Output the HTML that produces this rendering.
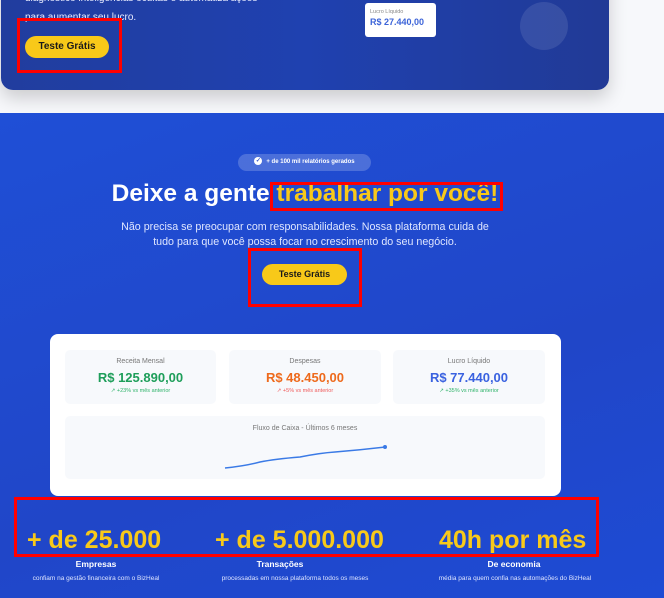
<!DOCTYPE html>
<html><head><meta charset="utf-8"><style>
*{margin:0;padding:0;box-sizing:border-box}
body{width:664px;height:598px;overflow:hidden;background:#f7f8fb;font-family:"Liberation Sans",sans-serif;position:relative}
.a{position:absolute}
.top{left:1px;top:-40px;width:608px;height:130px;border-radius:12px;background:linear-gradient(90deg,#213d9e,#1f41b0 50%,#213a96);box-shadow:0 8px 18px rgba(0,0,0,.18)}
.btn{background:#f8c919;color:#1a1a1a;font-size:10px;font-weight:bold;border-radius:12px;text-align:center}
.red{border:3px solid #f00}
.sec{left:0;top:113px;width:664px;height:485px;background:linear-gradient(160deg,#1f4fd6,#2046c8 60%,#1e4bd4)}
.c{text-align:center}
.box{background:#f7f9fc;border-radius:5px}
.lbl{font-size:7px;color:#777;}
.val{font-size:13px;font-weight:bold;margin-top:5px}
.sm{font-size:5.5px;margin-top:3px}
.stat{font-size:25px;font-weight:bold;color:#f8c919;top:526px;white-space:nowrap}
.st{font-size:8.5px;font-weight:bold;color:#fff;top:559px}
.sd{font-size:6.5px;color:#dfe6ff;top:575px}
</style></head><body>
<div class="a top"></div>
<div class="a" style="left:25px;top:-11px;font-size:10px;color:#e8ecff;line-height:19px">diagnóstico inteligências ocultas e automatiza ações<br>para aumentar seu lucro.</div>
<div class="a btn" style="left:25px;top:36px;width:84px;height:22px;line-height:22px">Teste Grátis</div>
<div class="a red" style="left:17px;top:18px;width:105px;height:55px"></div>
<div class="a" style="left:365px;top:3px;width:71px;height:34px;background:#fff;border-radius:3px;padding:6px 5px">
<div style="font-size:5.5px;color:#888">Lucro Líquido</div>
<div style="font-size:9px;font-weight:bold;color:#3b63d8;margin-top:2px">R$ 27.440,00</div></div>
<div class="a" style="left:520px;top:2px;width:48px;height:48px;border-radius:50%;background:rgba(255,255,255,.1)"></div>
<div class="a sec"></div>
<div class="a c" style="left:238px;top:154px;width:133px;height:17px;border-radius:9px;background:rgba(255,255,255,.2);color:#fff;font-size:6px;font-weight:bold;line-height:17px"><span style="display:inline-block;width:8px;height:8px;border-radius:50%;background:#fff;color:#3050c8;font-size:6px;line-height:8px;vertical-align:middle;margin-right:4px">✓</span>+ de 100 mil relatórios gerados</div>
<div class="a c" style="left:0;top:180px;width:610px;font-size:24.5px;font-weight:bold;color:#fff">Deixe a gente <span style="color:#f8c919">trabalhar por você!</span></div>
<div class="a red" style="left:270px;top:182px;width:233px;height:29px"></div>
<div class="a c" style="left:90px;top:220px;width:430px;font-size:10.7px;line-height:15px;color:#dfe6ff">Não precisa se preocupar com responsabilidades. Nossa plataforma cuida de<br>tudo para que você possa focar no crescimento do seu negócio.</div>
<div class="a btn" style="left:262px;top:264px;width:85px;height:21px;line-height:21px;font-size:9px">Teste Grátis</div>
<div class="a red" style="left:248px;top:248px;width:114px;height:59px"></div>
<div class="a" style="left:50px;top:334px;width:511px;height:162px;background:#fff;border-radius:8px"></div>
<div class="a box c" style="left:65px;top:350px;width:151px;height:54px;padding-top:8px"><div class="lbl">Receita Mensal</div><div class="val" style="color:#1e9e5a">R$ 125.890,00</div><div class="sm" style="color:#2fb36a">↗ +23% vs mês anterior</div></div>
<div class="a box c" style="left:229px;top:350px;width:152px;height:54px;padding-top:8px"><div class="lbl">Despesas</div><div class="val" style="color:#ee6a1c">R$ 48.450,00</div><div class="sm" style="color:#ef5a5a">↗ +5% vs mês anterior</div></div>
<div class="a box c" style="left:393px;top:350px;width:152px;height:54px;padding-top:8px"><div class="lbl">Lucro Líquido</div><div class="val" style="color:#3a62e0">R$ 77.440,00</div><div class="sm" style="color:#2fb36a">↗ +35% vs mês anterior</div></div>
<div class="a box c" style="left:65px;top:416px;width:480px;height:63px;padding-top:9px"><div class="lbl">Fluxo de Caixa - Últimos 6 meses</div></div>
<svg class="a" style="left:0;top:0" width="664" height="598"><path d="M225 468 Q245 466 260 462 Q275 459 300 457 Q320 453 335 452 Q360 450 385 447" fill="none" stroke="#3a7ae6" stroke-width="1.5"/><circle cx="385" cy="447" r="2" fill="#3a7ae6"/></svg>
<div class="a stat" style="left:27px">+ de 25.000</div>
<div class="a stat" style="left:215px">+ de 5.000.000</div>
<div class="a stat" style="left:439px">40h por mês</div>
<div class="a red" style="left:14px;top:497px;width:585px;height:60px"></div>
<div class="a st c" style="left:26px;width:140px">Empresas</div>
<div class="a st c" style="left:210px;width:140px">Transações</div>
<div class="a st c" style="left:444px;width:140px">De economia</div>
<div class="a sd c" style="left:16px;width:160px">confiam na gestão financeira com o BizHeal</div>
<div class="a sd c" style="left:210px;width:170px">processadas em nossa plataforma todos os meses</div>
<div class="a sd c" style="left:420px;width:190px">média para quem confia nas automações do BizHeal</div>
</body></html>
